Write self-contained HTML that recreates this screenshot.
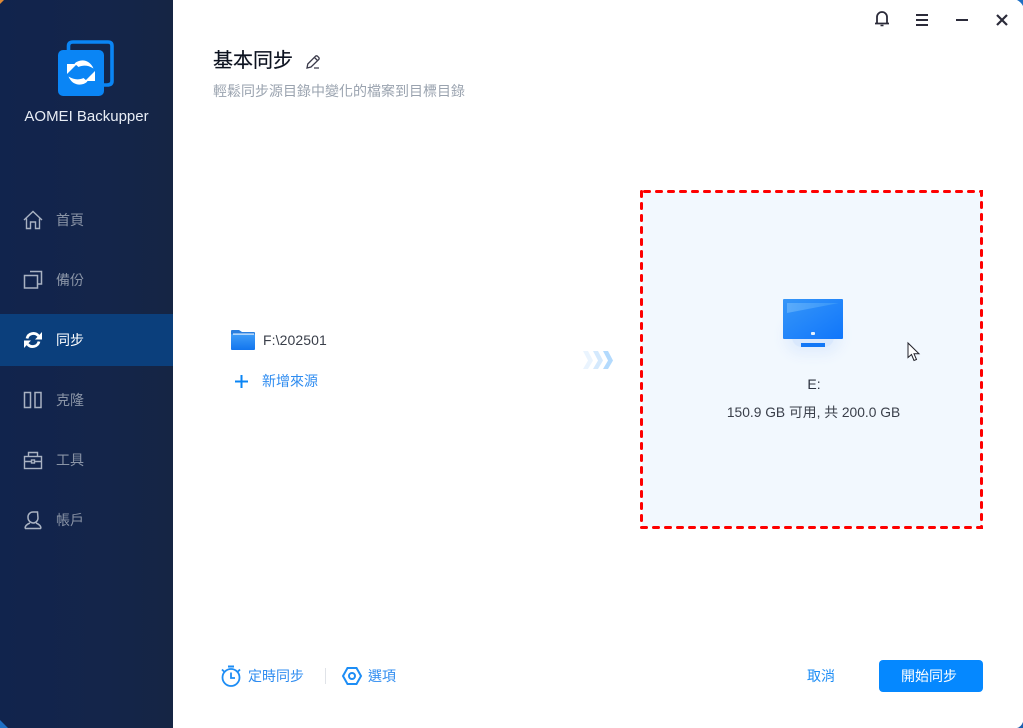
<!DOCTYPE html>
<html lang="zh-Hant">
<head>
<meta charset="utf-8">
<style>
html,body{margin:0;padding:0;width:1023px;height:728px;overflow:hidden;background:#fff;font-family:"Liberation Sans","Noto Sans CJK TC",sans-serif}
.a{position:absolute;white-space:nowrap}
#side{position:absolute;left:0;top:0;width:173px;height:728px;background:linear-gradient(90deg,#11244d 0,#14254a 60%,#152544 100%)}
.nav{position:absolute;left:56px;font-size:14px;line-height:20px;color:#8a94a6;letter-spacing:0}
svg{position:absolute;overflow:visible}
</style>
</head>
<body>
<div id="side"></div>
<svg style="left:0;top:0" width="8" height="8"><path d="M0 0H4L0 4Z" fill="#e08a35"/></svg>
<svg style="left:0;top:720px" width="8" height="8"><path d="M0 0L8 8H0Z" fill="#1d6fc4"/></svg>
<svg style="left:1015px;top:0" width="8" height="8"><path d="M2 0H8V6Q6 2 2 0Z" fill="#1d6fc4"/></svg>
<svg style="left:1015px;top:720px" width="8" height="8"><path d="M8 2V8H2Q6 7 8 2Z" fill="#1d5fb0"/></svg>

<!-- logo -->
<svg style="left:56px;top:38px" width="60" height="60" viewBox="0 0 60 60">
<path d="M12.500 12V8Q12.500 4 17 4H52Q56 4 56 8V43Q56 47 51 47H46" fill="none" stroke="#0a85f5" stroke-width="3.600"/>
<rect x="2" y="12" width="46" height="46" rx="5" fill="#0a85f5"/>
<path d="M11 26V36L21 26Z" fill="#fff"/>
<path d="M18.500 25.500C24 20.500 33.500 21 37.500 30.500C32 27 27 27 22.500 29Z" fill="#fff"/>
<g transform="rotate(180 25 34.500)">
<path d="M11 26V36L21 26Z" fill="#fff"/>
<path d="M18.500 25.500C24 20.500 33.500 21 37.500 30.500C32 27 27 27 22.500 29Z" fill="#fff"/>
</g>
</svg>
<div class="a" style="left:0;width:173px;top:107px;text-align:center;font-size:15px;line-height:20px;color:#e8edf5;">AOMEI Backupper</div>

<!-- active -->
<div style="position:absolute;left:0;top:314px;width:173px;height:52px;background:#0b3f7c"></div>

<!-- nav icons -->
<svg style="left:23px;top:210px" width="20" height="20" viewBox="0 0 20 20" fill="none" stroke="#a9b2c2" stroke-width="1.400">
<path d="M1 10L10 1.500 19 10M3.500 8.500V18.500H7.500V12H12.500V18.500H16.500V8.500"/></svg>
<svg style="left:23px;top:270px" width="20" height="20" viewBox="0 0 20 20" fill="none" stroke="#a9b2c2" stroke-width="1.500">
<rect x="1.500" y="5.500" width="13" height="12.500"/><path d="M7 1.500H18.500V14H15"/></svg>
<svg style="left:23px;top:330px" width="20" height="20" viewBox="0 0 20 20" fill="none" stroke="#fff" stroke-width="2.800">
<path d="M4 8.500A6.500 6.500 0 0 1 15.500 6"/><path d="M16 11.500A6.500 6.500 0 0 1 4.500 14"/>
<path d="M19.500 3V10.500H12.500Z" fill="#fff" stroke="none" transform="translate(-.5,-1)"/><path d="M.5 17V9.500H7.500Z" fill="#fff" stroke="none" transform="translate(.5,1)"/></svg>
<svg style="left:23px;top:390px" width="20" height="20" viewBox="0 0 20 20" fill="none" stroke="#a9b2c2" stroke-width="1.500">
<rect x="1.500" y="2.500" width="6" height="15"/><rect x="12" y="2.500" width="6" height="15"/></svg>
<svg style="left:23px;top:450px" width="20" height="20" viewBox="0 0 20 20" fill="none" stroke="#a9b2c2" stroke-width="1.400">
<rect x="1.500" y="6.500" width="17" height="12"/><path d="M5.500 6.500V2.500H14.500V6.500M1.500 11.500H18.500"/><rect x="8.500" y="10" width="3" height="3" fill="#14254a"/></svg>
<svg style="left:23px;top:510px" width="20" height="20" viewBox="0 0 20 20" fill="none" stroke="#a9b2c2" stroke-width="1.500">
<path d="M14.500 2H10A5 5 0 0 0 5 7A5.500 5.500 0 0 0 10 13A5 5 0 0 0 15 8Z"/><path d="M2 18.500Q2 15 7 13M18 18.500Q18 15 13 13M2 18.500H18"/></svg>

<div class="nav" style="top:210px">首頁</div>
<div class="nav" style="top:270px">備份</div>
<div class="nav" style="top:330px;color:#fff">同步</div>
<div class="nav" style="top:390px">克隆</div>
<div class="nav" style="top:450px">工具</div>
<div class="nav" style="top:510px">帳戶</div>

<!-- window controls -->
<svg style="left:870px;top:8px" width="140" height="22" viewBox="0 0 140 22" fill="none" stroke="#2b2b3a" stroke-width="2">
<path d="M7 15V9A5 5 0 0 1 17 9V15M5 15.500H19" stroke-width="1.800"/><path d="M10.500 17.500H13.500" stroke-width="1.500"/>
<path d="M46 7H58M46 12H58M46 17H58"/>
<path d="M86 12H98"/>
<path d="M127 7L137 17M137 7L127 17" stroke-width="2.200"/>
</svg>

<!-- title -->
<div class="a" style="left:213px;top:48px;font-size:20px;line-height:26px;color:#0d1320;-webkit-text-stroke:.2px #0d1320">基本同步</div>
<svg style="left:305px;top:54px" width="16" height="16" viewBox="0 0 16 16" fill="none" stroke="#3a3a4a" stroke-width="1.300">
<path d="M2 14L2.800 10 10.500 2.200Q11.500 1.500 12.500 2.200L13.800 3.500Q14.500 4.500 13.800 5.500L6 13Z"/><path d="M9 14H14M9.500 3.500L12.500 6.500"/></svg>
<div class="a" style="left:213px;top:81px;font-size:14px;line-height:20px;color:#9aa3af;">輕鬆同步源目錄中變化的檔案到目標目錄</div>

<!-- source -->
<svg style="left:231px;top:329px" width="24" height="22" viewBox="0 0 24 22">
<defs><linearGradient id="f" x1="0" y1="0" x2="0" y2="1"><stop offset="0" stop-color="#3f9df8"/><stop offset="1" stop-color="#1275ee"/></linearGradient></defs>
<path d="M0 2Q0 1 1 1H8L11 3H23Q24 3 24 4V8H0Z" fill="#2a7fdf"/>
<rect x="0" y="5" width="24" height="16" rx="1" fill="url(#f)"/>
<rect x="2" y="4.500" width="21" height="1.200" fill="#e3f0fe"/>
</svg>
<div class="a" style="left:263px;top:330px;font-size:14px;line-height:20px;color:#3a3f4a;letter-spacing:.1px">F:\202501</div>
<svg style="left:235px;top:375px" width="13" height="13" viewBox="0 0 13 13"><path d="M6.500 0V13M0 6.500H13" stroke="#0a85f5" stroke-width="2"/></svg>
<div class="a" style="left:262px;top:371px;font-size:14px;line-height:20px;color:#2f8cf0;">新增來源</div>

<!-- arrows -->
<svg style="left:583px;top:351px" width="32" height="19" viewBox="0 0 32 19">
<path d="M0 0H5L10 9.500 5 18H0L5 9.500Z" fill="#eaf4fe"/>
<path d="M10 0H15L20 9.500 15 18H10L15 9.500Z" fill="#d4e9fd"/>
<path d="M20 0H25L30 9.500 25 18H20L25 9.500Z" fill="#b3dafd"/>
</svg>

<!-- target -->
<div style="position:absolute;left:642px;top:192px;width:340px;height:335px;background:#f2f8fe"></div>
<svg style="left:640px;top:190px" width="343" height="339" viewBox="0 0 343 339">
<path d="M1.500 1.500H341.500V337.500H1.500Z" fill="none" stroke="#fe0000" stroke-width="3" stroke-dasharray="5 7" stroke-linecap="round" stroke-dashoffset="-3"/>
</svg>

<!-- monitor -->
<div style="position:absolute;left:792px;top:325px;width:42px;height:22px;background:#d9e8fd;box-shadow:0 0 12px 8px #e3eefd;border-radius:10px"></div>
<svg style="left:783px;top:299px" width="60" height="50" viewBox="0 0 60 50">
<defs><linearGradient id="m" x1="0" y1="0" x2="1" y2="1"><stop offset="0" stop-color="#3696f8"/><stop offset="1" stop-color="#1076fb"/></linearGradient>
<linearGradient id="h" x1="0" y1="0" x2="1" y2="0"><stop offset="0" stop-color="#6cb6fb"/><stop offset="1" stop-color="#3c9bf9"/></linearGradient></defs>
<rect x="0" y="0" width="60" height="40" rx="1" fill="url(#m)"/>
<path d="M4 4H56L4 14Z" fill="url(#h)" opacity=".7"/>
<rect x="28" y="33" width="4" height="3" rx="1" fill="#e6f2ff"/>
<rect x="18" y="44" width="24" height="4" fill="#1478f6"/>
</svg>
<div class="a" style="left:642px;width:344px;top:374px;text-align:center;font-size:14px;line-height:20px;color:#2d3340">E:</div>
<div class="a" style="left:642px;width:343px;top:403px;text-align:center;font-size:13.800px;line-height:20px;color:#3a3f4a">150.9 GB 可用, 共 200.0 GB</div>

<!-- cursor -->
<svg style="left:907px;top:342px" width="14" height="20" viewBox="0 0 14 20">
<path d="M1 1V15.500L4.500 12.500 7 18.500 9.500 17.500 7 11.800H12Z" fill="#fff" stroke="#22222a" stroke-width="1"/></svg>

<!-- bottom -->
<svg style="left:220px;top:664px" width="22" height="24" viewBox="0 0 22 24" fill="none" stroke="#1d8df5" stroke-width="1.800">
<circle cx="11" cy="13.500" r="8.500"/><path d="M8 2.500H14" stroke-width="2"/><path d="M11 8.500V14H15"/><path d="M2 5.500L4 7.500M20 5.500L18 7.500"/></svg>
<div class="a" style="left:248px;top:666px;font-size:14px;line-height:20px;color:#2f8cf0;">定時同步</div>
<div style="position:absolute;left:325px;top:668px;width:1px;height:16px;background:#e0e3e8"></div>
<svg style="left:342px;top:666px" width="20" height="20" viewBox="0 0 20 20" fill="none" stroke="#1d8df5" stroke-width="2">
<path d="M5.500 2H14.500L19 10 14.500 18H5.500L1 10Z"/><circle cx="10" cy="10" r="3"/></svg>
<div class="a" style="left:368px;top:666px;font-size:14px;line-height:20px;color:#2f8cf0;">選項</div>
<div class="a" style="left:807px;top:666px;font-size:14px;line-height:20px;color:#1d8df5;">取消</div>
<div style="position:absolute;left:879px;top:660px;width:100px;padding-right:4px;height:32px;background:#0588ff;border-radius:4px;color:#fff;font-size:14px;line-height:32px;text-align:center;">開始同步</div>
</body>
</html>
